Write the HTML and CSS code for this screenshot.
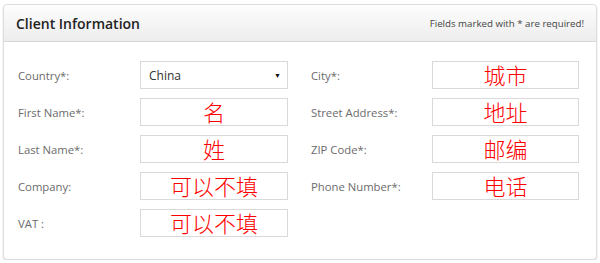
FILE: index.html
```html
<!DOCTYPE html>
<html>
<head>
<meta charset="utf-8">
<link rel="stylesheet" href="styles.css">
</head>
<body>
<div class="panel">
  <div class="panel-head">
    <span class="title">Client Information</span>
    <span class="note">Fields marked with * are required!</span>
  </div>
  <div class="panel-body">
    <label class="lbl">Country*:</label>
    <div class="field select"><span class="val">China</span><span class="arrow">▼</span></div>
    <label class="lbl">City*:</label>
    <div class="field cjk">城市</div>

    <label class="lbl">First Name*:</label>
    <div class="field cjk">名</div>
    <label class="lbl">Street Address*:</label>
    <div class="field cjk">地址</div>

    <label class="lbl">Last Name*:</label>
    <div class="field cjk">姓</div>
    <label class="lbl">ZIP Code*:</label>
    <div class="field cjk">邮编</div>

    <label class="lbl">Company:</label>
    <div class="field cjk">可以不填</div>
    <label class="lbl">Phone Number*:</label>
    <div class="field cjk">电话</div>

    <label class="lbl">VAT :</label>
    <div class="field cjk">可以不填</div>
  </div>
</div>
</body>
</html>
```

FILE: styles.css
```css
html, body {
  margin: 0;
  padding: 0;
  background: #ffffff;
}
body {
  font-family: "Open Sans", "Liberation Sans", sans-serif;
}
.panel {
  margin: 4px 3px 0 3px;
  width: 592px;
  border: 1px solid #dcdcdc;
  border-radius: 4px;
  box-shadow: 0 1px 2px rgba(0,0,0,0.12);
  background: #fff;
}
.panel-head {
  height: 36px;
  display: flex;
  align-items: center;
  justify-content: space-between;
  padding: 0 12px 0 12px;
  background: linear-gradient(#fdfdfd, #ededed);
  border-bottom: 1px solid #d6d6d6;
  border-radius: 4px 4px 0 0;
}
.title {
  font-size: 14px;
  font-weight: 600;
  color: #222;
}
.note {
  font-size: 9.7px;
  color: #444;
}
.panel-body {
  display: grid;
  grid-template-columns: 122px 148px 144px 147px;
  row-gap: 9px;
  padding: 19px 16px 22px 14px;
}
.panel-body > :nth-child(4n+3) {
  margin-left: 23px;
}
.lbl {
  display: flex;
  align-items: center;
  height: 28px;
  font-size: 11.3px;
  color: #6b6b6b;
}
.field {
  box-sizing: border-box;
  height: 28px;
  border: 1px solid #d9d9d9;
  background: #fff;
  display: flex;
  align-items: center;
}
.select {
  justify-content: space-between;
  padding: 0 6px 0 8px;
}
.val {
  font-size: 12px;
  color: #333;
}
.arrow {
  font-size: 7px;
  color: #111;
}
.cjk {
  justify-content: center;
  padding-bottom: 3px;
  font-family: "Noto Sans CJK SC", sans-serif;
  font-weight: 300;
  font-size: 22px;
  color: #ff0000;
  line-height: 1;
}
```
